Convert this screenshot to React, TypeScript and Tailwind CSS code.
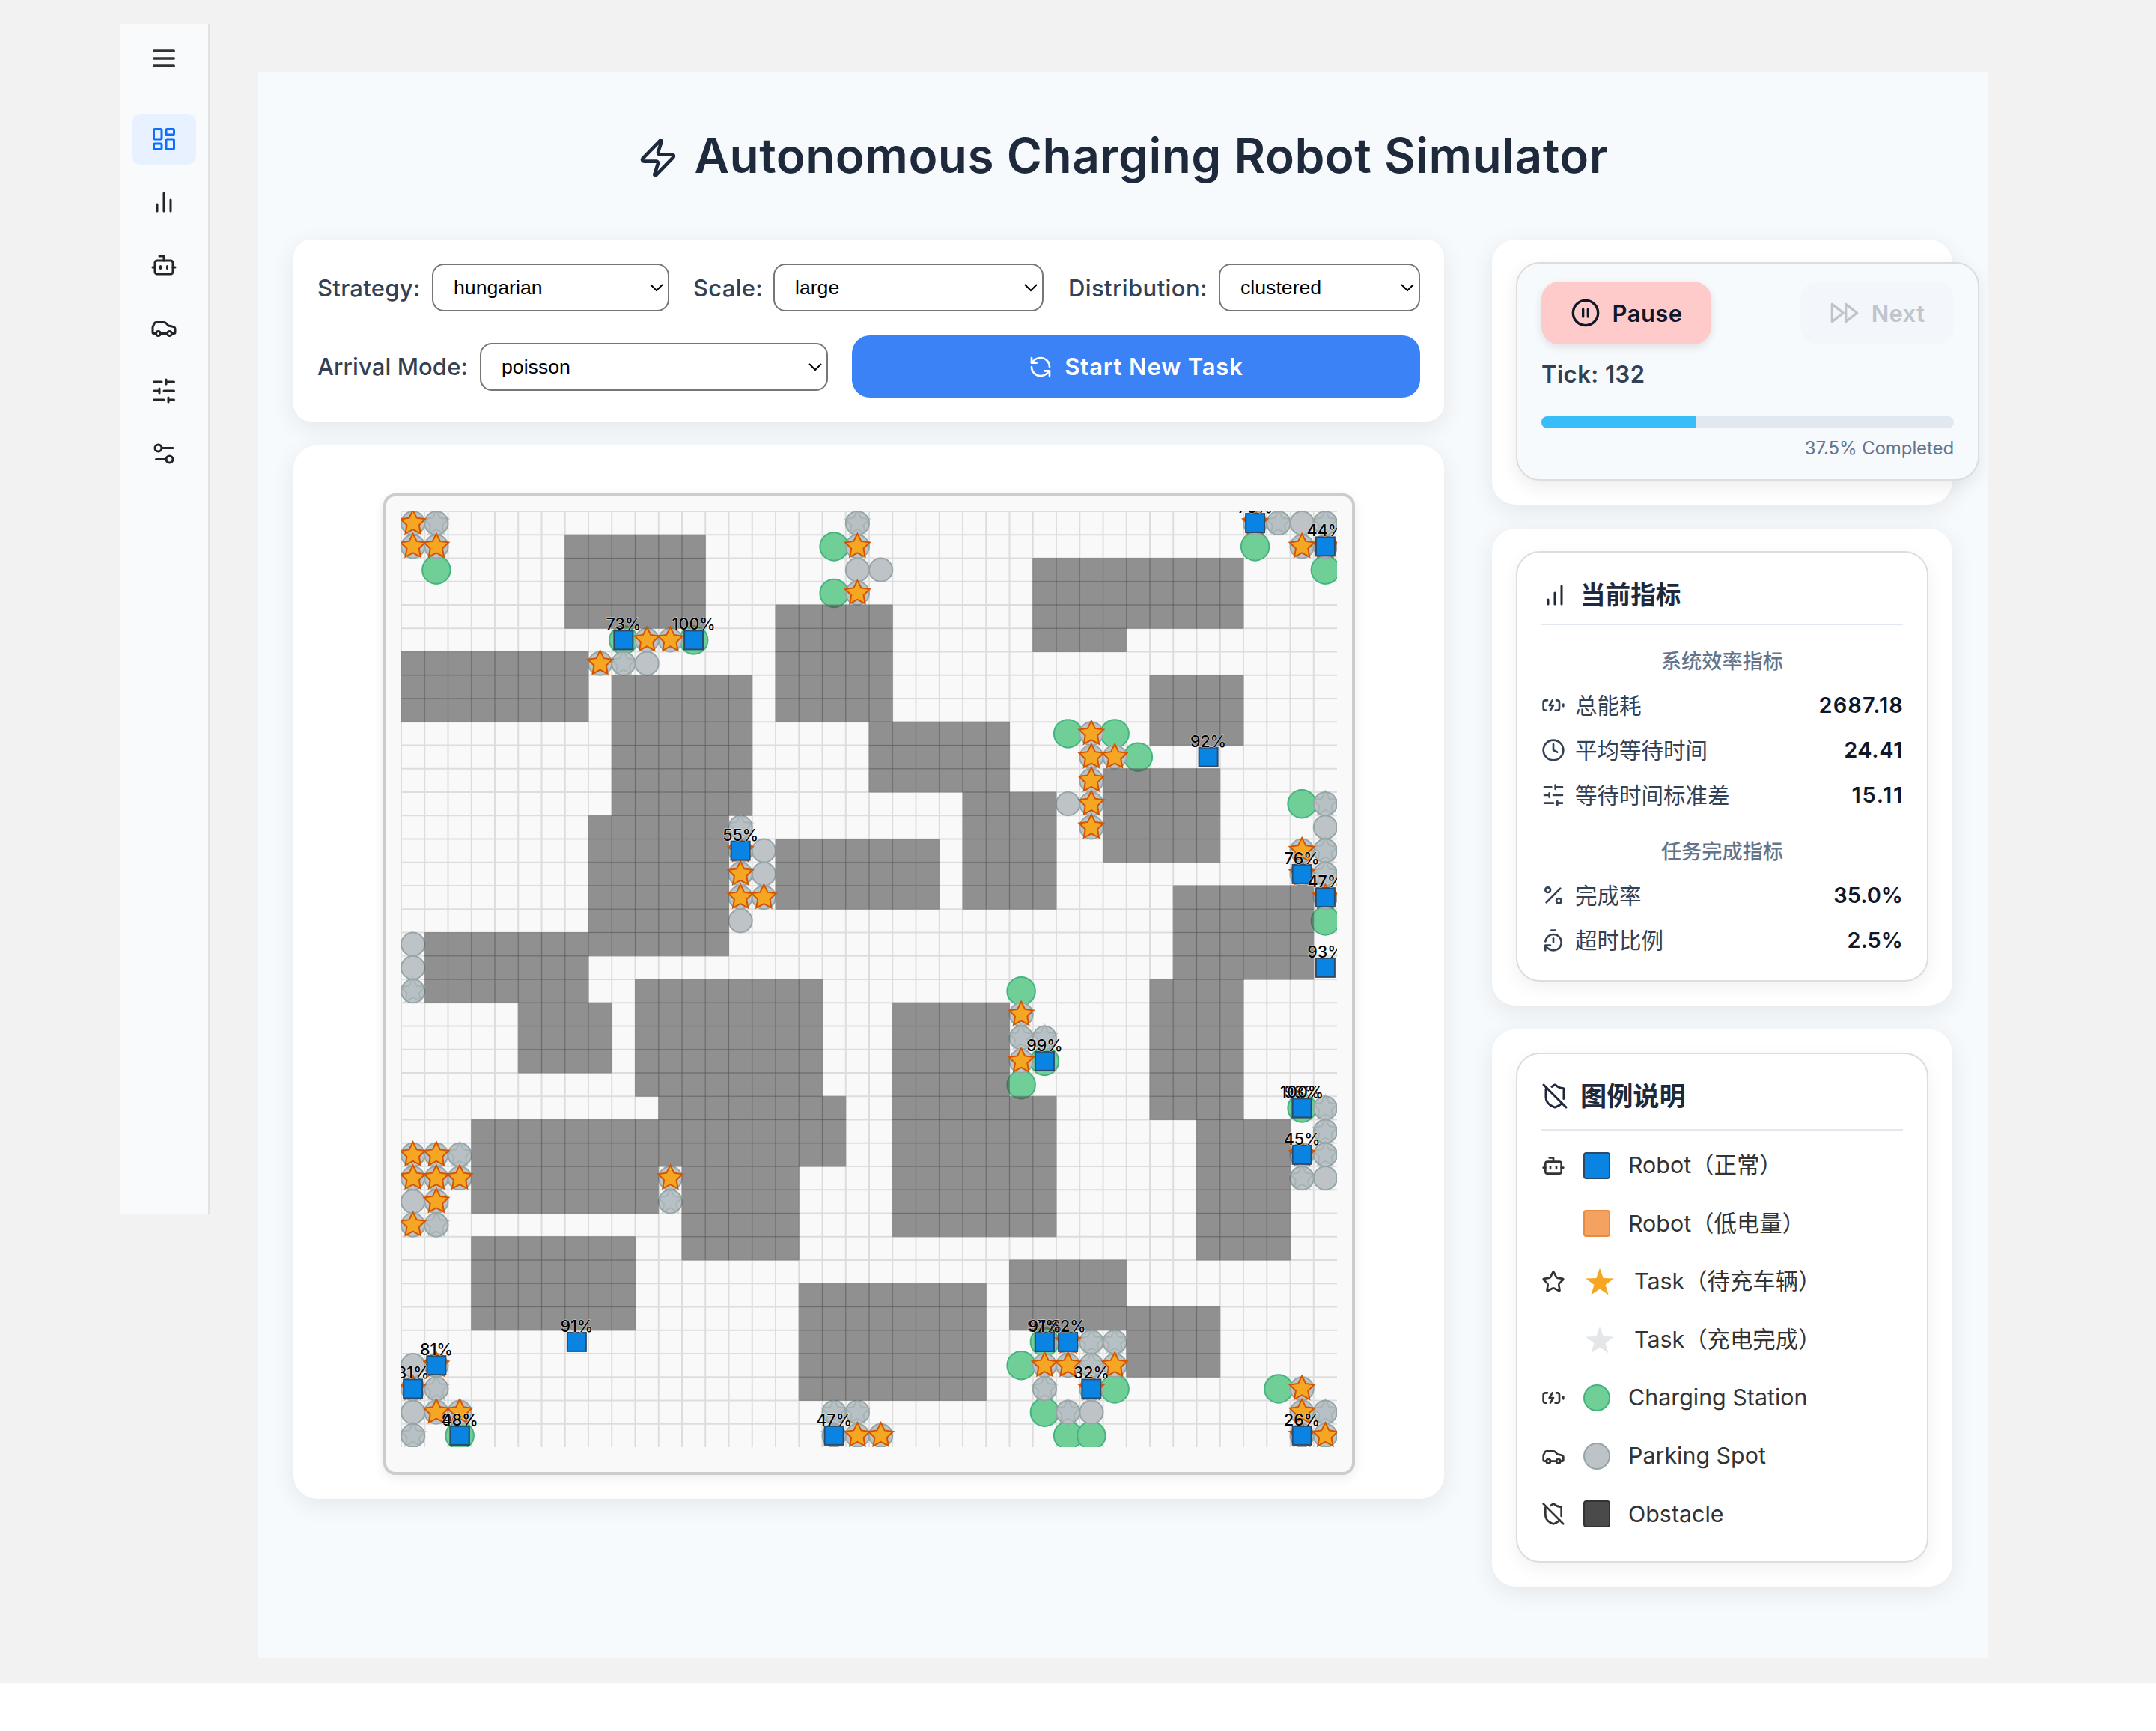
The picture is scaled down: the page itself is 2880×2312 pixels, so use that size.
import React from "react";
import {
  Bot,
  Car,
  CirclePause,
  Clock,
  Percent,
  RefreshCcw,
  ShieldOff,
  Star,
  TimerReset,
  Zap,
} from "lucide-react";

const FONT = "font-['Inter','Noto_Sans_CJK_SC',sans-serif]";

type IconProps = { size: number; className?: string; children: React.ReactNode };

function Glyph({ size, className, children }: IconProps) {
  return (
    <svg
      width={size}
      height={size}
      viewBox="0 0 24 24"
      fill="none"
      stroke="currentColor"
      strokeWidth={2}
      strokeLinecap="round"
      strokeLinejoin="round"
      className={className}
    >
      {children}
    </svg>
  );
}

const MenuIcon = () => (
  <Glyph size={40}>
    <path d="M4 6h16M4 12h16M4 18h16" />
  </Glyph>
);
const DashboardIcon = () => (
  <Glyph size={36}>
    <rect x="3" y="3" width="7" height="9" rx="1" />
    <rect x="14" y="3" width="7" height="5" rx="1" />
    <rect x="14" y="12" width="7" height="9" rx="1" />
    <rect x="3" y="16" width="7" height="5" rx="1" />
  </Glyph>
);
const BarsIcon = () => (
  <Glyph size={36}>
    <path d="M18 20V10M12 20V4M6 20v-6" />
  </Glyph>
);
const RisingBarsIcon = () => (
  <Glyph size={36}>
    <path d="M12 20V10M18 20V4M6 20v-4" />
  </Glyph>
);
const SlidersIcon = ({ size }: { size: number }) => (
  <Glyph size={size}>
    <path d="M21 4h-7M10 4H3M21 12h-9M8 12H3M21 20h-5M12 20H3M14 2v4M8 10v4M16 18v4" />
  </Glyph>
);
const TogglesIcon = () => (
  <Glyph size={36}>
    <path d="M20 7h-9M14 17H5" />
    <circle cx="17" cy="17" r="3" />
    <circle cx="7" cy="7" r="3" />
  </Glyph>
);
const BatteryIcon = () => (
  <Glyph size={32}>
    <path d="M15 7h1a2 2 0 0 1 2 2v6a2 2 0 0 1-2 2h-2M6 7H4a2 2 0 0 0-2 2v6a2 2 0 0 0 2 2h1M11 7l-3 5h4l-3 5M22 11v2" />
  </Glyph>
);
const ForwardIcon = () => (
  <Glyph size={40}>
    <path d="M13 19l9-7-9-7zM2 19l9-7-9-7z" />
  </Glyph>
);

function Sidebar() {
  return (
    <aside className="mt-8 ml-40 flex h-[1590px] w-[120px] shrink-0 flex-col items-center border-r-2 border-[#dee2e6] bg-[#f8fafc] text-[#212529]">
      <div className="mt-[26px] flex h-10 items-center text-[#333]">
        <MenuIcon />
      </div>
      <nav className="mt-[54px] flex flex-col gap-4">
        <a className="flex h-[68px] w-[86px] items-center justify-center rounded-xl bg-[#e7f1ff] text-[#0d6efd]">
          <DashboardIcon />
        </a>
        <a className="flex h-[68px] w-[86px] items-center justify-center">
          <BarsIcon />
        </a>
        <a className="flex h-[68px] w-[86px] items-center justify-center">
          <Bot size={36} />
        </a>
        <a className="flex h-[68px] w-[86px] items-center justify-center">
          <Car size={36} />
        </a>
        <a className="flex h-[68px] w-[86px] items-center justify-center">
          <SlidersIcon size={36} />
        </a>
        <a className="flex h-[68px] w-[86px] items-center justify-center">
          <TogglesIcon />
        </a>
      </nav>
    </aside>
  );
}

function SelectBox({ value, className }: { value: string; className: string }) {
  return (
    <div
      className={
        "flex h-16 shrink-0 items-center justify-between rounded-2xl border-2 border-[#767676] bg-white pr-[6px] pl-[27px] font-['Liberation_Sans',sans-serif] text-[26.67px] text-black " +
        className
      }
    >
      <span>{value}</span>
      <svg width="18" height="12" viewBox="0 0 18 12" fill="none" stroke="black" strokeWidth="2">
        <path d="M1 2l8 8 8-8" />
      </svg>
    </div>
  );
}

function Label({ text, className }: { text: string; className: string }) {
  return (
    <span
      className={
        "shrink-0 text-[31px] leading-none font-medium whitespace-nowrap text-[#334155] " + className
      }
    >
      {text}
    </span>
  );
}

function Controls() {
  return (
    <section className="flex h-[243px] flex-col gap-8 rounded-3xl bg-white p-8 shadow-[0_8px_32px_rgba(0,0,0,0.08)]">
      <div className="flex h-16 items-center">
        <Label text="Strategy:" className="w-[153px] tracking-[0.3px]" />
        <SelectBox value="hungarian" className="w-[317px]" />
        <Label text="Scale:" className="ml-8 w-[107px] tracking-[0.3px]" />
        <SelectBox value="large" className="w-[361px]" />
        <Label text="Distribution:" className="ml-[33px] w-[201px] tracking-[0.4px]" />
        <SelectBox value="clustered" className="w-[269px]" />
      </div>
      <div className="flex h-[83px] items-center">
        <Label text="Arrival Mode:" className="w-[217px] tracking-[0.1px]" />
        <SelectBox value="poisson" className="w-[465px]" />
        <button className="ml-8 flex h-[83px] flex-1 items-center justify-center gap-4 rounded-3xl bg-[#3b82f6] text-[31px] font-semibold text-white">
          <RefreshCcw size={32} />
          <span className="pt-[2px] tracking-[0.85px]">Start New Task</span>
        </button>
      </div>
    </section>
  );
}

const CELL = 31.25;

/* x, y, width, height in cells */
const obstacles = [
  [7, 1, 6, 4], [0, 6, 8, 3], [9, 7, 6, 6], [8, 13, 6, 6], [1, 18, 7, 3],
  [16, 4, 5, 5], [20, 9, 6, 3], [16, 14, 7, 3], [24, 12, 4, 5], [27, 2, 9, 3],
  [27, 5, 4, 1], [32, 7, 4, 3], [30, 11, 5, 4], [33, 16, 6, 4], [32, 20, 4, 6],
  [34, 26, 4, 6], [21, 21, 5, 10], [26, 25, 2, 6], [26, 32, 5, 3], [31, 34, 4, 3],
  [17, 33, 8, 5], [5, 21, 4, 3], [10, 20, 8, 5], [11, 25, 8, 3], [3, 26, 8, 4],
  [12, 28, 5, 4], [3, 31, 7, 4],
];

const obstacleCells = Array.from(
  new Set(
    obstacles.flatMap(([x, y, w, h]) =>
      Array.from({ length: w * h }, (_, i) => `${x + (i % w)},${y + Math.floor(i / w)}`)
    )
  )
).map((key) => key.split(",").map(Number));

const stations = [
  [1, 2], [18, 1], [18, 3], [9, 5], [12, 5], [36, 1], [39, 2], [28, 9], [30, 9], [31, 10],
  [38, 12], [39, 17], [2, 39], [26, 20], [27, 23], [26, 24], [38, 25], [27, 35], [26, 36],
  [30, 37], [27, 38], [28, 39], [29, 39], [37, 37],
];

const emptySpots = [
  [19, 2], [20, 2], [10, 6], [15, 14], [15, 15], [14, 17], [0, 18], [0, 19], [38, 0],
  [28, 12], [39, 13], [0, 29], [0, 36], [0, 38], [39, 28], [29, 38],
];

const waiting = [
  [0, 0], [0, 1], [1, 1], [19, 1], [19, 3], [10, 5], [11, 5], [8, 6], [14, 14], [14, 15],
  [14, 16], [15, 16], [36, 0], [38, 1], [39, 1], [29, 9], [29, 10], [30, 10], [29, 11],
  [29, 12], [29, 13], [38, 14], [38, 15], [39, 16], [0, 27], [1, 27], [0, 28], [1, 28],
  [2, 28], [1, 29], [0, 30], [11, 28], [1, 36], [0, 37], [1, 38], [2, 38], [19, 39],
  [20, 39], [26, 21], [26, 23], [38, 27], [28, 35], [27, 36], [28, 36], [30, 36], [29, 37],
  [38, 37], [38, 38], [38, 39], [39, 39],
];

const charged = [
  [1, 0], [19, 0], [9, 6], [14, 13], [0, 20], [37, 0], [39, 0], [39, 12], [39, 14], [39, 15],
  [2, 27], [1, 30], [11, 29], [1, 37], [0, 39], [18, 38], [19, 38], [18, 39], [26, 22],
  [27, 22], [39, 25], [39, 26], [39, 27], [38, 28], [29, 35], [30, 35], [29, 36], [27, 37],
  [28, 38], [39, 38],
];

const robots: [number, number, string][] = [
  [9, 5, "73%"], [12, 5, "100%"], [14, 14, "55%"], [36, 0, "76%"], [39, 1, "44%"],
  [34, 10, "92%"], [38, 15, "76%"], [39, 16, "47%"], [39, 19, "93%"], [7, 35, "91%"],
  [1, 36, "81%"], [0, 37, "81%"], [2, 39, "98%"], [2, 39, "48%"], [18, 39, "47%"],
  [27, 23, "99%"], [38, 25, "98%"], [38, 25, "100%"], [38, 27, "45%"], [28, 35, "62%"],
  [27, 35, "97%"], [27, 35, "91%"], [29, 37, "32%"], [38, 39, "26%"],
];

const mid = (n: number) => (n + 0.5) * CELL;

function starPoints(cx: number, cy: number, outer: number, inner: number) {
  return Array.from({ length: 10 }, (_, i) => {
    const r = i % 2 === 0 ? outer : inner;
    const a = -Math.PI / 2 + (i * Math.PI) / 5;
    return `${(cx + r * Math.cos(a)).toFixed(2)},${(cy + r * Math.sin(a)).toFixed(2)}`;
  }).join(" ");
}

function GridMap() {
  const lines = Array.from({ length: 40 }, (_, i) => i * CELL);
  return (
    <svg width="1250" height="1250" viewBox="0 0 1250 1250" className="block overflow-hidden">
      <g stroke="#dddddd" strokeWidth="2">
        {lines.map((p) => (
          <React.Fragment key={p}>
            <line x1={p} y1="0" x2={p} y2="1250" />
            <line x1="0" y1={p} x2="1250" y2={p} />
          </React.Fragment>
        ))}
      </g>
      <g fill="#6fcf97" stroke="#45b37f" strokeWidth="2">
        {stations.map(([x, y]) => (
          <circle key={`${x}-${y}`} cx={mid(x)} cy={mid(y)} r="18.75" />
        ))}
      </g>
      <g fill="#bdc3c7" stroke="#95a5a6" strokeWidth="2">
        {[...emptySpots, ...waiting, ...charged].map(([x, y]) => (
          <circle key={`${x}-${y}`} cx={mid(x)} cy={mid(y)} r="15.6" />
        ))}
      </g>
      <g fill="#4c4c4c" stroke="#585858" strokeWidth="1">
        {obstacleCells.map(([x, y]) => (
          <rect
            key={`${x}-${y}`}
            x={x * CELL}
            y={y * CELL}
            width={CELL}
            height={CELL}
            opacity="0.6"
          />
        ))}
      </g>
      <g fill="#b2bec3" stroke="#95a5a6" strokeWidth="2">
        {charged.map(([x, y]) => (
          <polygon key={`${x}-${y}`} points={starPoints(mid(x), mid(y), 17.2, 8.6)} opacity="0.5" />
        ))}
      </g>
      <g fill="#f5a623" stroke="#d35400" strokeWidth="2">
        {waiting.map(([x, y]) => (
          <polygon key={`${x}-${y}`} points={starPoints(mid(x), mid(y), 17.2, 8.6)} />
        ))}
      </g>
      {robots.map(([x, y, label], i) => (
        <g key={i}>
          <rect
            x={mid(x) - 12.5}
            y={mid(y) - 12.5}
            width="25"
            height="25"
            fill="#0984e3"
            stroke="#2d4a68"
            strokeWidth="2"
          />
          <text
            x={mid(x)}
            y={mid(y) - 13.4}
            textAnchor="middle"
            fontSize="21.5"
            fontWeight="500"
            fill="#000000"
            stroke="#ffffff"
            strokeWidth="1.2"
            strokeOpacity="0.6"
            paintOrder="stroke"
            className="font-['Inter',sans-serif]"
          >
            {label}
          </text>
        </g>
      ))}
    </svg>
  );
}

function MapCard() {
  return (
    <section className="flex h-[1407px] flex-col items-center rounded-[32px] bg-white pt-16 shadow-[0_8px_32px_rgba(0,0,0,0.08)]">
      <div className="h-[1311px] w-[1298px] rounded-2xl border-4 border-[#cccccc] bg-[#f9f9f9] p-5 shadow-[0_4px_16px_rgba(0,0,0,0.08)]">
        <GridMap />
      </div>
    </section>
  );
}

function PlaybackCard() {
  return (
    <section className="h-[354px] rounded-[32px] bg-white pt-[30px] pl-8 shadow-[0_8px_32px_rgba(0,0,0,0.08)]">
      <div className="flex h-[292px] w-[619px] flex-col rounded-[32px] border-2 border-[#dddddd] bg-[#f7fafd] px-8 pt-6 shadow-[0_8px_24px_rgba(0,0,0,0.08)]">
        <div className="flex justify-between">
          <button className="flex h-[84px] w-[227px] items-center justify-center gap-4 rounded-3xl bg-[#fecaca] text-[31px] font-semibold text-[#0f172a] shadow-[0_4px_12px_rgba(0,0,0,0.1)]">
            <CirclePause size={40} />
            <span className="pt-[2px] tracking-[0.4px]">Pause</span>
          </button>
          <button className="flex h-[84px] w-[205px] items-center justify-center gap-4 rounded-3xl bg-[#f3f6fa] text-[31px] font-semibold text-[#c0c5cd]">
            <ForwardIcon />
            <span className="pt-[2px] tracking-[0.3px]">Next</span>
          </button>
        </div>
        <div className="mt-4 h-12 text-[31px] leading-[48px] font-semibold tracking-[0.5px] text-[#334155]">
          Tick: 132
        </div>
        <div className="mt-8 h-4 overflow-hidden rounded-full bg-[#e2e8f0]">
          <div className="h-full w-[37.5%] bg-[#38bdf8]" />
        </div>
        <div className="mt-2 h-9 text-right text-[24px] leading-[37px] tracking-[-0.1px] text-[#64748b]">
          37.5% Completed
        </div>
      </div>
    </section>
  );
}

type MetricProps = { icon: React.ReactNode; name: string; value: string; tracking?: string };

function Metric({ icon, name, value, tracking = "" }: MetricProps) {
  return (
    <div className="flex h-[60px] items-center text-[29.5px] text-[#334155]">
      {icon}
      <span className="ml-[13px] flex-1">{name}</span>
      <span className={"text-[29px] font-semibold text-[#0f172a] " + tracking}>{value}</span>
    </div>
  );
}

function MetricsCard() {
  return (
    <section className="h-[637px] rounded-[32px] bg-white px-8 pt-[30px] shadow-[0_8px_32px_rgba(0,0,0,0.08)]">
      <div className="flex h-[575px] flex-col rounded-[32px] border-2 border-[#dddddd] bg-white px-8 pt-6 shadow-[0_8px_24px_rgba(0,0,0,0.06)]">
        <div className="flex h-[73px] items-center gap-4 border-b-2 border-[#e2e8f0] pb-[6px] text-[33.6px] font-bold text-[#1e293b]">
          <RisingBarsIcon />
          <span className="pt-px">当前指标</span>
        </div>
        <div className="mt-7 h-10 text-center text-[27.2px] leading-[42px] font-medium text-[#64748b]">
          系统效率指标
        </div>
        <div className="mt-[9px] flex flex-col">
          <Metric icon={<BatteryIcon />} name="总能耗" value="2687.18" tracking="-mr-px tracking-[1.1px]" />
          <Metric icon={<Clock size={32} />} name="平均等待时间" value="24.41" tracking="tracking-[0.6px]" />
          <Metric
            icon={<SlidersIcon size={32} />}
            name="等待时间标准差"
            value="15.11"
            tracking="-mr-px tracking-[1.7px]"
          />
        </div>
        <div className="mt-6 h-10 text-center text-[27.2px] leading-[43px] font-medium text-[#64748b]">
          任务完成指标
        </div>
        <div className="mt-[10px] flex flex-col">
          <Metric icon={<Percent size={32} />} name="完成率" value="35.0%" />
          <Metric icon={<TimerReset size={32} />} name="超时比例" value="2.5%" />
        </div>
      </div>
    </section>
  );
}

function LegendRow({ icon, mark, text }: { icon?: React.ReactNode; mark: React.ReactNode; text: string }) {
  return (
    <div className="flex h-[77.6px] items-center text-[30.4px] text-[#333]">
      <span className="flex w-8 shrink-0">{icon}</span>
      <span className="ml-6 flex shrink-0">{mark}</span>
      <span className="ml-6 whitespace-nowrap">{text}</span>
    </div>
  );
}

function LegendStar({ fill }: { fill: string }) {
  return (
    <svg width="44" height="36" viewBox="0 0 44 36">
      <polygon points={starPoints(22, 19.5, 19.8, 8)} fill={fill} />
    </svg>
  );
}

function LegendCard() {
  return (
    <section className="h-[744px] rounded-[32px] bg-white px-8 pt-[31px] shadow-[0_8px_32px_rgba(0,0,0,0.08)]">
      <div className="flex h-[681px] flex-col rounded-[32px] border-2 border-[#dddddd] bg-white px-8 pt-6 shadow-[0_8px_24px_rgba(0,0,0,0.06)]">
        <div className="mb-2 flex h-[78px] shrink-0 items-center gap-4 border-b-2 border-[#e2e8f0] pb-3 text-[35.2px] font-bold text-[#1e293b]">
          <ShieldOff size={36} />
          <span className="pt-px">图例说明</span>
        </div>
        <LegendRow
          icon={<Bot size={32} />}
          mark={<i className="size-9 rounded border-2 border-[#2c4a68] bg-[#0984e3]" />}
          text="Robot（正常）"
        />
        <LegendRow
          mark={<i className="size-9 rounded border-2 border-[#e78b3c] bg-[#f4a261]" />}
          text="Robot（低电量）"
        />
        <LegendRow icon={<Star size={32} />} mark={<LegendStar fill="#f5a623" />} text="Task（待充车辆）" />
        <LegendRow mark={<LegendStar fill="#e3e7ea" />} text="Task（充电完成）" />
        <LegendRow
          icon={<BatteryIcon />}
          mark={<i className="size-9 rounded-full border-2 border-[#45b37f] bg-[#6fcf97]" />}
          text="Charging Station"
        />
        <LegendRow
          icon={<Car size={32} />}
          mark={<i className="size-9 rounded-full border-2 border-[#95a5a6] bg-[#bdc3c7]" />}
          text="Parking Spot"
        />
        <LegendRow
          icon={<ShieldOff size={32} />}
          mark={<i className="size-9 rounded border-2 border-[#333333] bg-[#4a4a4a]" />}
          text="Obstacle"
        />
      </div>
    </section>
  );
}

export default function App() {
  return (
    <div className={"min-h-[2312px] w-[2880px] bg-white " + FONT}>
      <div className="flex h-[2248px] bg-[#f2f2f2]">
        <Sidebar />
        <main className="mt-24 ml-16 h-[2119px] w-[2312px] overflow-hidden bg-[#f7fafd] px-12 pt-12">
          <h1 className="flex h-32 items-center justify-center gap-5 text-[64px] font-semibold text-[#1e293b]">
            <Zap size={56} className="mt-[6px]" />
            <span className="tracking-[0.5px]">Autonomous Charging Robot Simulator</span>
          </h1>
          <div className="mt-12 flex gap-16">
            <div className="flex w-[1537px] flex-col gap-8">
              <Controls />
              <MapCard />
            </div>
            <div className="flex w-[615px] flex-col gap-8">
              <PlaybackCard />
              <MetricsCard />
              <LegendCard />
            </div>
          </div>
        </main>
      </div>
    </div>
  );
}
